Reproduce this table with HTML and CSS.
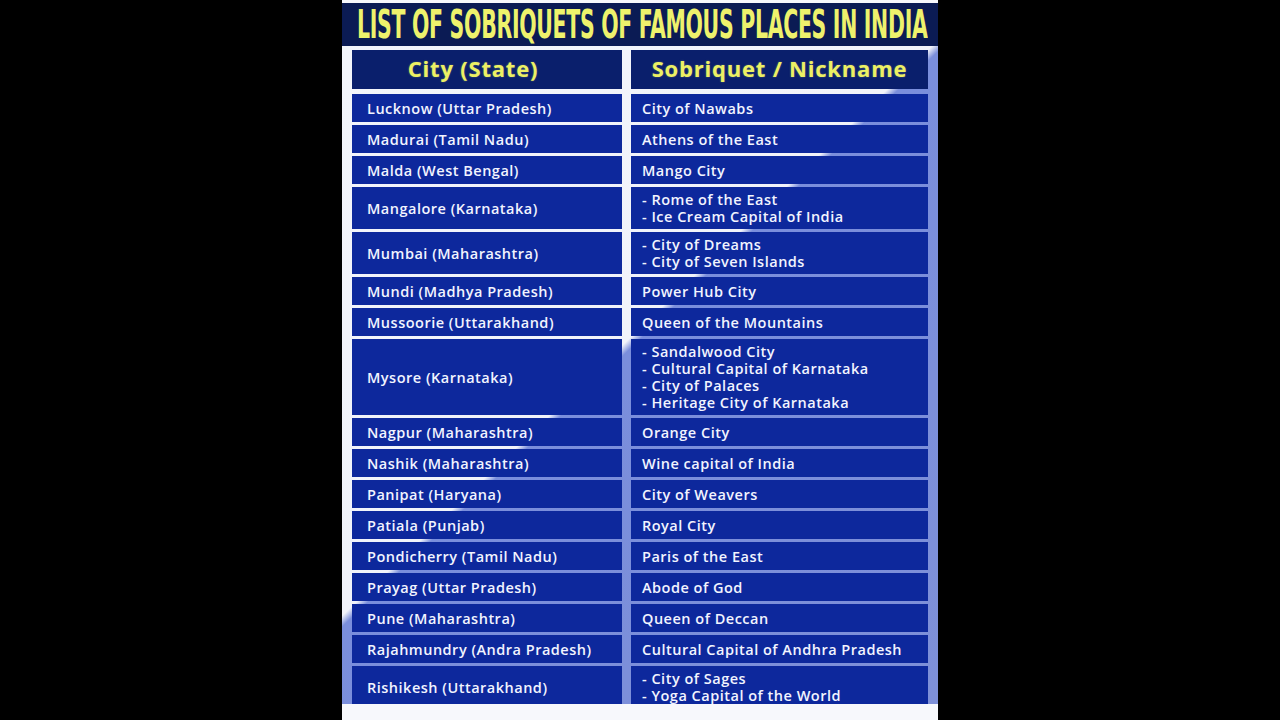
FILE: index.html
```html
<!DOCTYPE html>
<html>
<head>
<meta charset="utf-8">
<link rel="stylesheet" href="styles.css">
</head>
<body>
<div class="panel">
  <div class="title"><span class="title-text">LIST OF SOBRIQUETS OF FAMOUS PLACES IN INDIA</span></div>
  <div class="board">
    <div class="grid">
      <div class="head head-city">City (State)</div>
      <div class="head">Sobriquet / Nickname</div>

      <div class="cell city">Lucknow (Uttar Pradesh)</div>
      <div class="cell nick">City of Nawabs</div>
      <div class="cell city">Madurai (Tamil Nadu)</div>
      <div class="cell nick">Athens of the East</div>
      <div class="cell city">Malda (West Bengal)</div>
      <div class="cell nick">Mango City</div>
      <div class="cell city">Mangalore (Karnataka)</div>
      <div class="cell nick">- Rome of the East<br>- Ice Cream Capital of India</div>
      <div class="cell city">Mumbai (Maharashtra)</div>
      <div class="cell nick">- City of Dreams<br>- City of Seven Islands</div>
      <div class="cell city">Mundi (Madhya Pradesh)</div>
      <div class="cell nick">Power Hub City</div>
      <div class="cell city">Mussoorie (Uttarakhand)</div>
      <div class="cell nick">Queen of the Mountains</div>
      <div class="cell city">Mysore (Karnataka)</div>
      <div class="cell nick">- Sandalwood City<br>- Cultural Capital of Karnataka<br>- City of Palaces<br>- Heritage City of Karnataka</div>
      <div class="cell city">Nagpur (Maharashtra)</div>
      <div class="cell nick">Orange City</div>
      <div class="cell city">Nashik (Maharashtra)</div>
      <div class="cell nick">Wine capital of India</div>
      <div class="cell city">Panipat (Haryana)</div>
      <div class="cell nick">City of Weavers</div>
      <div class="cell city">Patiala (Punjab)</div>
      <div class="cell nick">Royal City</div>
      <div class="cell city">Pondicherry (Tamil Nadu)</div>
      <div class="cell nick">Paris of the East</div>
      <div class="cell city">Prayag (Uttar Pradesh)</div>
      <div class="cell nick">Abode of God</div>
      <div class="cell city">Pune (Maharashtra)</div>
      <div class="cell nick">Queen of Deccan</div>
      <div class="cell city">Rajahmundry (Andra Pradesh)</div>
      <div class="cell nick">Cultural Capital of Andhra Pradesh</div>
      <div class="cell city">Rishikesh (Uttarakhand)</div>
      <div class="cell nick">- City of Sages<br>- Yoga Capital of the World</div>
    </div>
  </div>
</div>
</body>
</html>
```

FILE: styles.css
```css
html, body {
  margin: 0;
  padding: 0;
  background: #000;
  height: 720px;
  overflow: hidden;
}

body {
  display: flex;
  justify-content: center;
}

.panel {
  width: 596px;
  height: 720px;
  background: #f7f8fc;
  padding-top: 3px;
  box-sizing: border-box;
  display: flex;
  flex-direction: column;
}

.title {
  height: 43px;
  background: #0b1b54;
  display: flex;
  align-items: center;
  padding-left: 15px;
  overflow: hidden;
  white-space: nowrap;
}

.title-text {
  display: inline-block;
  font-family: "DejaVu Sans Condensed", "Liberation Sans", sans-serif;
  font-weight: 700;
  font-size: 39px;
  line-height: 1;
  color: #eef26c;
  transform-origin: left center;
  transform: scaleX(0.583);
  letter-spacing: -0.5px;
}

.board {
  height: 658px;
  overflow: hidden;
  background: linear-gradient(136deg, #f3f5fb 0px, #f1f3fa 410px, #7a8edc 418px, #7e90d8 100%);
  padding: 4px 10px 0 10px;
  box-sizing: border-box;
}

.grid {
  display: grid;
  grid-template-columns: 270px 297px;
  column-gap: 9px;
  row-gap: 3px;
}

.head {
  height: 39px;
  margin-bottom: 2px;
  padding-bottom: 3px;
  box-sizing: border-box;
  background: #0a1f6c;
  color: #ecf064;
  font-family: "Open Sans", "Noto Sans", sans-serif;
  font-weight: 700;
  font-size: 22px;
  letter-spacing: 0.8px;
  display: flex;
  align-items: center;
  justify-content: center;
  text-shadow: 0 0 2px rgba(230, 240, 120, 0.35);
}

.head-city {
  padding-right: 28px;
}

.cell {
  min-height: 28px;
  box-sizing: border-box;
  padding: 4px 0;
  background: #0d289c;
  color: #f2f4ff;
  font-family: "Open Sans", "Noto Sans", sans-serif;
  font-weight: 600;
  font-size: 14.5px;
  letter-spacing: 0.5px;
  line-height: 17px;
  display: flex;
  align-items: center;
}

.city {
  padding-left: 15px;
}

.nick {
  padding-left: 11px;
}
```
